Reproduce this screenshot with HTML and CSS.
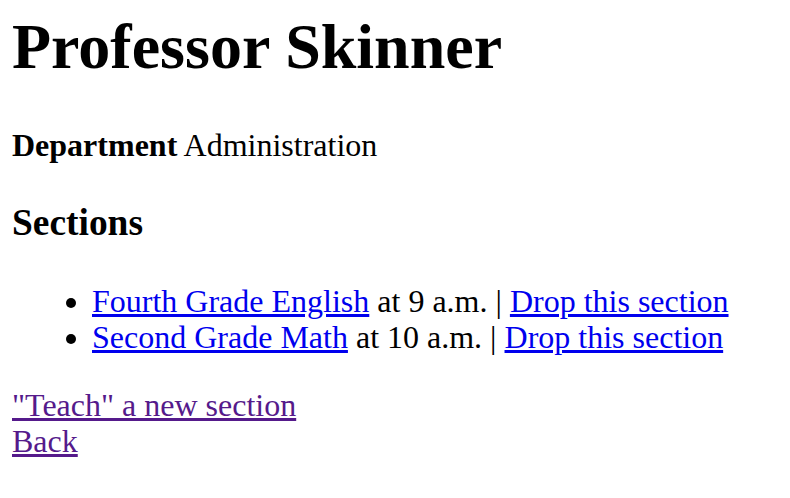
FILE: index.html
```html
<!DOCTYPE html>
<html>
<head>
<meta charset="utf-8">
<title>Professor Skinner</title>
<link rel="stylesheet" href="styles.css">
</head>
<body>
<h1 class="title">Professor Skinner</h1>
<p class="dept"><strong>Department</strong> Administration</p>
<h3 class="sections">Sections</h3>
<ul class="section-list">
  <li><a class="link" href="#">Fourth Grade English</a> at 9 a.m. | <a class="link" href="#">Drop this section</a></li>
  <li><a class="link" href="#">Second Grade Math</a> at 10 a.m. | <a class="link" href="#">Drop this section</a></li>
</ul>
<p class="actions"><a class="link visited" href="#">"Teach" a new section</a><br><a class="link visited" href="#">Back</a></p>
</body>
</html>
```
FILE: styles.css
```css
html, body {
  background: #ffffff;
}
body {
  margin: 0;
  padding: 2px 12px 0;
  font-family: "Liberation Serif", "Times New Roman", serif;
  font-size: 32px;
  line-height: 36px;
  color: #000000;
}
.title {
  font-size: 64px;
  line-height: 72px;
  font-weight: bold;
  margin: 9px 0 0;
}
.dept {
  margin: 44px 0 0;
}
.sections {
  font-size: 37.44px;
  line-height: 42px;
  font-weight: bold;
  margin: 39px 0 0;
}
.section-list {
  margin: 39px 0 0;
  padding-left: 80px;
}
.actions {
  margin: 32px 0 0;
}
.link {
  color: #0000ee;
  text-decoration: underline;
}
.link.visited {
  color: #551a8b;
}
```
